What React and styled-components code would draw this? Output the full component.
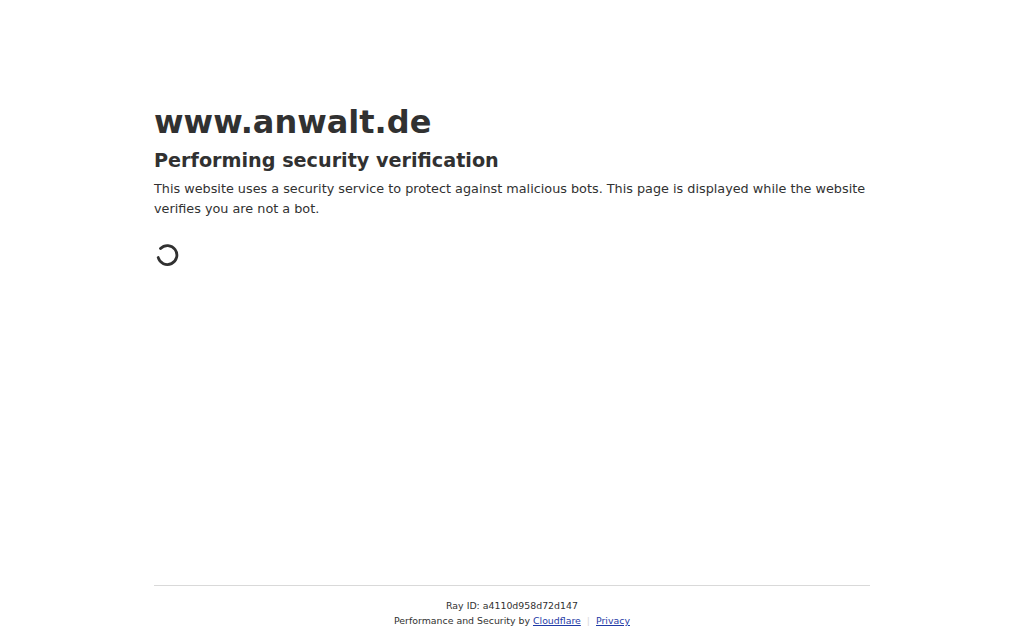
import React from "react";
import styled, { createGlobalStyle } from "styled-components";

const Global = createGlobalStyle`
  html, body { margin: 0; padding: 0; background: #ffffff; }
  body { font-family: "DejaVu Sans", "Liberation Sans", sans-serif; color: #313131; }
  * { box-sizing: border-box; }
`;

const Page = styled.div`
  height: 640px;
  display: flex;
  flex-direction: column;
`;

const Main = styled.main`
  flex: 1;
  width: 716px;
  margin: 0 auto;
  padding-top: 98px;
`;

const Title = styled.h1`
  margin: 0;
  font-size: 32px;
  line-height: 48px;
  font-weight: 700;
  color: #313131;
`;

const Subtitle = styled.h2`
  margin: 1px 0 0;
  font-size: 19.2px;
  line-height: 28px;
  font-weight: 700;
  color: #313131;
`;

const Text = styled.p`
  margin: 4px 0 0;
  font-size: 12.8px;
  line-height: 20px;
  color: #313131;
`;

const SpinnerBox = styled.div`
  margin-top: 22px;
  width: 26px;
  height: 26px;
`;

const Footer = styled.footer`
  width: 716px;
  margin: 0 auto;
  border-top: 1px solid #d9d9d9;
  padding: 12px 0 12px;
  text-align: center;
  font-size: 9.4px;
  line-height: 15px;
  color: #313131;
`;

const Line = styled.div``;

const Link = styled.a`
  color: #1f3aa6;
  text-decoration: underline;
`;

const Sep = styled.span`
  color: #d9d9d9;
  margin: 0 6px;
`;

function Spinner() {
  return (
    <svg width="26" height="26" viewBox="0 0 26 26">
      <path
        d="M 6.5 7.5 A 9.5 9.5 0 1 1 4.2 16.5"
        fill="none"
        stroke="#313131"
        strokeWidth="2.8"
        strokeLinecap="round"
      />
    </svg>
  );
}

export default function App() {
  return (
    <Page>
      <Global />
      <Main>
        <Title>www.anwalt.de</Title>
        <Subtitle>Performing security verification</Subtitle>
        <Text>
          This website uses a security service to protect against malicious bots. This page is displayed while the website verifies you are not a bot.
        </Text>
        <SpinnerBox>
          <Spinner />
        </SpinnerBox>
      </Main>
      <Footer>
        <Line>Ray ID: a4110d958d72d147</Line>
        <Line>
          Performance and Security by <Link href="#">Cloudflare</Link>
          <Sep>|</Sep>
          <Link href="#">Privacy</Link>
        </Line>
      </Footer>
    </Page>
  );
}
